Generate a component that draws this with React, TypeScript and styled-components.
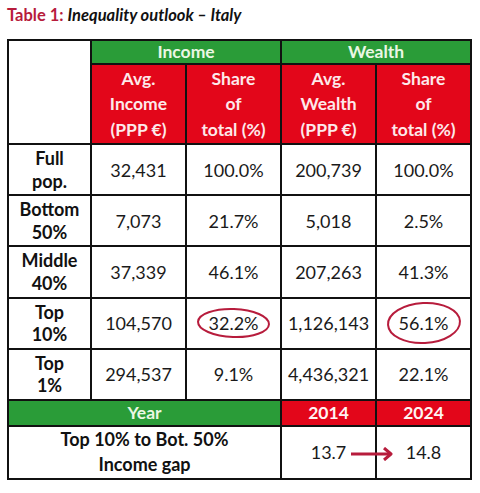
import React from 'react';
import styled, { createGlobalStyle } from 'styled-components';

const GlobalStyle = createGlobalStyle`
  body {
    margin: 0;
    background: #ffffff;
    font-family: Lato, "Open Sans", sans-serif;
    color: #111111;
  }
`;

const palette = {
  green: '#2a9c38',
  red: '#e3061a',
  crimson: '#b71c3c',
  line: '#111111',
};

interface Row {
  label: [string, string];
  values: string[];
  circled?: number[];
}

const rows: Row[] = [
  {label: ['Full', 'pop.'], values: ['32,431', '100.0%', '200,739', '100.0%']},
  {label: ['Bottom', '50%'], values: ['7,073', '21.7%', '5,018', '2.5%']},
  {label: ['Middle', '40%'], values: ['37,339', '46.1%', '207,263', '41.3%']},
  {label: ['Top', '10%'], values: ['104,570', '32.2%', '1,126,143', '56.1%'], circled: [1, 3]},
  {label: ['Top', '1%'], values: ['294,537', '9.1%', '4,436,321', '22.1%']},
];

const Ring: React.FC<{w: number; h: number; tilt?: number}> = ({w, h, tilt = 0}) => (
  <RingSvg width={w + 4} height={h + 4} style={{marginLeft: -(w + 4) / 2, marginTop: -(h + 4) / 2}}>
    <ellipse
      cx={(w + 4) / 2}
      cy={(h + 4) / 2}
      rx={w / 2}
      ry={h / 2}
      fill="none"
      stroke={palette.crimson}
      strokeWidth={2}
      transform={`rotate(${tilt} ${(w + 4) / 2} ${(h + 4) / 2})`}
    />
  </RingSvg>
);

const Arrow = () => (
  <ArrowSvg width="44" height="14" viewBox="0 0 44 14">
    <path d="M0 7 H40" stroke={palette.crimson} strokeWidth="3" />
    <path d="M33 1 L40 7 L33 13" stroke={palette.crimson} strokeWidth="3" fill="none" strokeLinejoin="round" />
  </ArrowSvg>
);

export default function App() {
  return (
    <Page>
      <GlobalStyle/>
      <Title>
        <TitleLabel>Table 1:</TitleLabel> <TitleText>Inequality outlook – Italy</TitleText>
      </Title>
      <Table>
        <colgroup>
          <col style={{width: 83}}/>
          <col style={{width: 95}}/>
          <col style={{width: 95}}/>
          <col style={{width: 95}}/>
          <col style={{width: 95}}/>
        </colgroup>
        <tbody>
          <tr>
            <BlankCell rowSpan={2}/>
            <GroupHead colSpan={2}>Income</GroupHead>
            <GroupHead colSpan={2}>Wealth</GroupHead>
          </tr>
          <tr>
            <ColHead>Avg.<br/>Income<br/>(PPP €)</ColHead>
            <ColHead>Share<br/>of<br/>total (%)</ColHead>
            <ColHead>Avg.<br/>Wealth<br/>(PPP €)</ColHead>
            <ColHead>Share<br/>of<br/>total (%)</ColHead>
          </tr>
          {rows.map(row => (
            <BodyRow key={row.label.join(' ')}>
              <LabelCell>{row.label[0]}<br/>{row.label[1]}</LabelCell>
              {row.values.map((v, i) => (
                <ValueCell key={i}>
                  {v}
                  {row.circled?.includes(i) && (
                    i === 1 ? <Ring w={71} h={28} tilt={2}/> : <Ring w={72} h={40} tilt={-3}/>
                  )}
                </ValueCell>
              ))}
            </BodyRow>
          ))}
          <YearRow>
            <GroupHead colSpan={3}>Year</GroupHead>
            <YearHead>2014</YearHead>
            <YearHead>2024</YearHead>
          </YearRow>
          <GapRow>
            <GapLabel colSpan={3}>Top 10% to Bot. 50%<br/>Income gap</GapLabel>
            <ValueCell>13.7<Arrow/></ValueCell>
            <ValueCell>14.8</ValueCell>
          </GapRow>
        </tbody>
      </Table>
    </Page>
  );
}

const Page = styled.div`
  width: 480px;
  height: 493px;
  padding: 4px 0 0 7px;
  box-sizing: border-box;
`;

const Title = styled.div`
  font-size: 16.5px;
  line-height: 22px;
  font-weight: 700;
  margin-bottom: 13px;
`;

const TitleLabel = styled.span`
  color: ${palette.crimson};
`;

const TitleText = styled.span`
  font-style: italic;
  color: #111111;
`;

const Table = styled.table`
  border-collapse: collapse;
  table-layout: fixed;
  width: 463px;
  text-align: center;

  td, th {
    border: 2px solid ${palette.line};
    padding: 0;
  }
`;

const BlankCell = styled.td`
  background: #ffffff;
`;

const GroupHead = styled.th`
  background: ${palette.green};
  color: #eaf7e4;
  font-weight: 700;
  font-size: 17.5px;
  height: 22px;
  line-height: 22px;
`;

const ColHead = styled.th`
  background: ${palette.red};
  color: #fde9ea;
  font-weight: 700;
  font-size: 17.5px;
  line-height: 25.5px;
  height: 78px;
`;

const YearRow = styled.tr`
  height: 26px;
`;

const YearHead = styled.th`
  background: ${palette.red};
  color: #fff4f2;
  font-weight: 700;
  font-size: 17.5px;
  line-height: 22px;
`;

const BodyRow = styled.tr`
  height: 51.2px;
`;

const LabelCell = styled.td`
  font-weight: 700;
  font-size: 18px;
  line-height: 22.5px;
`;

const ValueCell = styled.td`
  position: relative;
  font-size: 18px;
  color: #1a1a1a;
`;

const GapRow = styled.tr`
  height: 53px;
`;

const GapLabel = styled.td`
  font-weight: 700;
  font-size: 18px;
  line-height: 25px;
  padding-top: 2px;
`;

const RingSvg = styled.svg`
  position: absolute;
  left: 50%;
  top: 50%;
  pointer-events: none;
`;

const ArrowSvg = styled.svg`
  position: absolute;
  right: -20px;
  top: 50%;
  margin-top: -5px;
`;
